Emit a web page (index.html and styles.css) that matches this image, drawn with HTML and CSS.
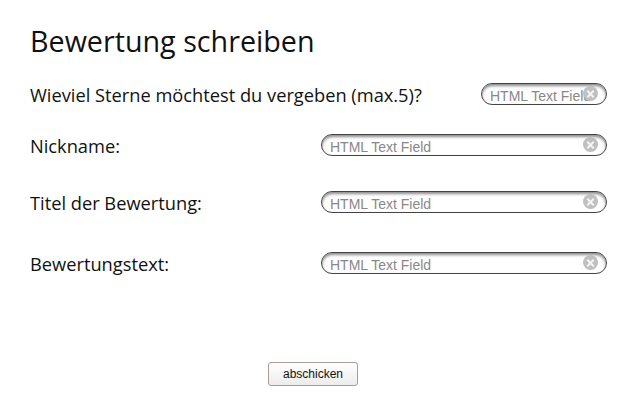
FILE: index.html
```html
<!DOCTYPE html>
<html lang="de">

<head>
    <meta charset="UTF-8">
    <meta name="viewport" content="width=device-width, initial-scale=1.0">
    <title>Bewertung schreiben</title>
    <link rel="stylesheet" href="styles.css">
</head>

<body>
    <div class="container">
        <h1>Bewertung schreiben</h1>
        <form action="">
            <div class="row row_stars">
                <label for="stars">Wieviel Sterne möchtest du vergeben (max.5)?</label>
                <div class="field field_small">
                    <input type="text" id="stars" placeholder="HTML Text Field">
                    <span class="clear"></span>
                </div>
            </div>

            <div class="row row_nick">
                <label for="nick">Nickname:</label>
                <div class="field">
                    <input type="text" id="nick" placeholder="HTML Text Field">
                    <span class="clear"></span>
                </div>
            </div>

            <div class="row row_title">
                <label for="title">Titel der Bewertung:</label>
                <div class="field">
                    <input type="text" id="title" placeholder="HTML Text Field">
                    <span class="clear"></span>
                </div>
            </div>

            <div class="row row_text">
                <label for="text">Bewertungstext:</label>
                <div class="field">
                    <input type="text" id="text" placeholder="HTML Text Field">
                    <span class="clear"></span>
                </div>
            </div>

            <div class="submit_row">
                <input type="submit" value="abschicken" id="submit_btn">
            </div>
        </form>
    </div>
</body>

</html>
```

FILE: styles.css
```css
* {
    margin: 0;
    padding: 0;
    box-sizing: border-box;
}

body {
    background: white;
    font-family: "Open Sans", sans-serif;
    color: #111;
}

.container {
    width: 640px;
    height: 400px;
    padding: 21px 33px 0 30px;
}

h1 {
    font-size: 28.7px;
    font-weight: normal;
    line-height: 40px;
}

.row {
    display: flex;
    justify-content: space-between;
    align-items: center;
    height: 24px;
}

.row label {
    font-size: 18.25px;
}

.row_stars {
    margin-top: 21px;
}

.row_nick {
    margin-top: 27px;
}

.row_title {
    margin-top: 33px;
}

.row_text {
    margin-top: 37px;
}

.field {
    position: relative;
    width: 286px;
    height: 22px;
    border: 1px solid #444;
    border-radius: 11px;
    background: white;
    box-shadow: inset 0 2px 3px #8a8a8a;
    overflow: hidden;
}

.field_small {
    width: 126px;
}

.field input {
    width: 100%;
    height: 100%;
    border: none;
    outline: none;
    background: transparent;
    padding: 0 0 2px 8px;
    font-family: "Liberation Sans", Arial, sans-serif;
    font-size: 14px;
    color: #888;
}

.field input::placeholder {
    color: #888;
}

.clear {
    position: absolute;
    right: 8px;
    top: 2px;
    width: 15px;
    height: 15px;
    border-radius: 50%;
    background: #c0c0c0;
}

.clear::before,
.clear::after {
    content: "";
    position: absolute;
    left: 3px;
    top: 6.5px;
    width: 9px;
    height: 2px;
    background: #f4f4f4;
    transform: rotate(45deg);
}

.clear::after {
    transform: rotate(-45deg);
}

.submit_row {
    margin-top: 86px;
    padding-left: 238px;
}

#submit_btn {
    width: 90px;
    height: 24px;
    font-family: "Liberation Sans", Arial, sans-serif;
    font-size: 12px;
    color: #111;
    border: 1px solid #a89f94;
    border-radius: 3px;
    background: linear-gradient(#ffffff, #ececec);
}
```
